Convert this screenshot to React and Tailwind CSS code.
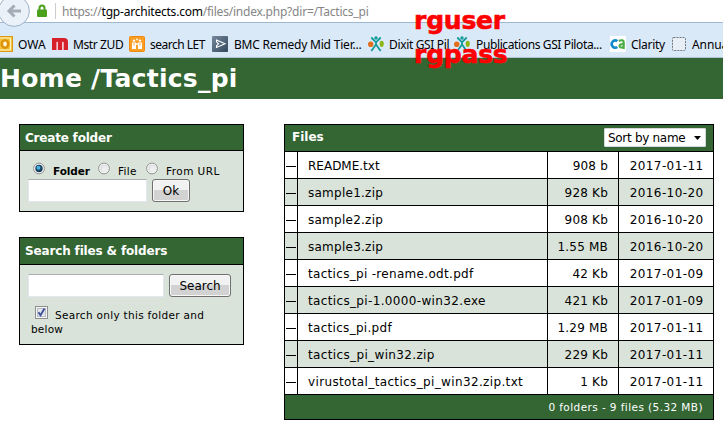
import React from 'react';

const files = [
  ['README.txt', '908 b', '2017-01-11', 'tracking-normal'],
  ['sample1.zip', '928 Kb', '2016-10-20', 'tracking-[0.25px]'],
  ['sample2.zip', '908 Kb', '2016-10-20', 'tracking-[0.25px]'],
  ['sample3.zip', '1.55 MB', '2016-10-20', 'tracking-[0.25px]'],
  ['tactics_pi -rename.odt.pdf', '42 Kb', '2017-01-09', 'tracking-[0.31px]'],
  ['tactics_pi-1.0000-win32.exe', '421 Kb', '2017-01-09', 'tracking-[0.35px]'],
  ['tactics_pi.pdf', '1.29 MB', '2017-01-11', 'tracking-[0.3px]'],
  ['tactics_pi_win32.zip', '229 Kb', '2017-01-11', 'tracking-[0.36px]'],
  ['virustotal_tactics_pi_win32.zip.txt', '1 Kb', '2017-01-11', 'tracking-[0.36px]'],
];

function OwaIcon() {
  return (
    <svg width="13" height="16" viewBox="3 0 13 16">
      <rect x="-1" y="0.5" width="16.5" height="15" fill="#f3c23c" stroke="#dc9a12" />
      <rect x="0" y="2" width="13.5" height="12" fill="none" stroke="#fff3c4" />
      <ellipse cx="8" cy="8" rx="3.2" ry="3.7" fill="#fff6d8" stroke="#dd9408" strokeWidth="2.6" />
    </svg>
  );
}

function MIcon() {
  return (
    <svg width="16" height="16" viewBox="0 0 16 16">
      <path d="M0 2H12Q16 2 16 6V14H11.5V7Q11.5 5.5 10.5 5.5V14H6V7Q6 5.5 4.8 5.5V14H0Z" fill="#d8202c" />
      <path d="M5.2 6V14M10.8 6V14" stroke="#f3c9d2" strokeWidth="1.4" />
    </svg>
  );
}

function SearchLetIcon() {
  return (
    <svg width="16" height="16" viewBox="0 0 16 16">
      <rect x="0.5" y="0.5" width="15" height="15" rx="1" fill="#fb9f24" stroke="#f08a13" />
      <g fill="#fff">
        <circle cx="5" cy="4.6" r="1.2" />
        <circle cx="11" cy="4.6" r="1.2" />
        <circle cx="8" cy="3.4" r="0.9" />
        <path d="M3 6.5H7V13H3ZM9 6.5H13V13H9ZM7 7.2H9V8.8H7Z" />
      </g>
      <path d="M5 7V9.5M11 7V9.5" stroke="#fb9f24" strokeWidth="0.8" />
    </svg>
  );
}

function BmcIcon() {
  return (
    <svg width="16" height="16" viewBox="0 0 16 16">
      <defs>
        <linearGradient id="bmc" x1="0" x2="1" y1="0" y2="1">
          <stop offset="0" stopColor="#75889b" />
          <stop offset="1" stopColor="#34485d" />
        </linearGradient>
      </defs>
      <rect width="16" height="16" rx="1" fill="url(#bmc)" />
      <path d="M4.5 4L13 7.8L4.5 11.5V9.8L6.5 7.8L4.5 5.8Z" fill="none" stroke="#fff" strokeWidth="1.1" />
    </svg>
  );
}

function PersonIcon() {
  return (
    <svg width="16" height="16" viewBox="0 0 16 16">
      <ellipse cx="2.7" cy="8.2" rx="2.7" ry="2.8" fill="#e0701e" />
      <ellipse cx="13.7" cy="7.8" rx="2.1" ry="3.1" fill="#8cb616" />
      <circle cx="8" cy="2" r="1.7" fill="#149a9a" />
      <path d="M3.3 1.5L8 6.3L12.7 1.5M8 6V8.5M3.3 15L8 8.5L12.7 15" fill="none" stroke="#149a9a" strokeWidth="1.8" />
    </svg>
  );
}

function CaIcon() {
  return (
    <svg width="16" height="16" viewBox="0 0 16 16">
      <rect width="16" height="16" fill="#fff" />
      <path d="M7.3 5.2A3.4 3.7 0 1 0 7.3 11" fill="none" stroke="#118acb" strokeWidth="2.6" />
      <path d="M8.8 4.9Q13.7 3 13.7 6.5V13M13.5 8.2Q9.5 7.7 9.5 10Q9.7 12.4 13.5 11" fill="none" stroke="#4dae48" strokeWidth="2.2" />
    </svg>
  );
}

function EmptyIcon() {
  return (
    <svg width="14" height="14" viewBox="0 0 14 14">
      <rect x="0.5" y="0.5" width="13" height="13" rx="1" fill="#e8eff7" stroke="#6f767d" strokeDasharray="2 1" />
    </svg>
  );
}

function Bookmark({ icon, label, width, text }) {
  return (
    <div className={'flex h-4 shrink-0 items-center gap-[5px] ' + width}>
      <span className="shrink-0">{icon}</span>
      <span className={'whitespace-pre pt-px leading-4 ' + text}>{label}</span>
    </div>
  );
}

function BrowserBar() {
  return (
    <header className="h-[58px] bg-[#dae9f8] font-['Noto_Sans','Open_Sans',sans-serif] text-[12px] text-black">
      <div className="flex h-[23px] items-start overflow-visible border-b border-[#9fb8d2] bg-white">
        <svg width="30" height="28" viewBox="0 0 30 28" className="relative shrink-0">
          <circle cx="14" cy="11" r="15.4" fill="#eaf1f9" stroke="#9db1c8" />
          <path d="M21 11H10M14.5 5.5L9 11L14.5 16.5" fill="none" stroke="#a4acb5" strokeWidth="3" />
        </svg>
        <svg width="10" height="13" viewBox="0 0 10 13" className="ml-[7px] mt-1 shrink-0">
          <path d="M2.5 6V4Q2.5 1.5 5 1.5T7.5 4V6" fill="none" stroke="#4ba01c" strokeWidth="2" />
          <rect y="5.5" width="10" height="7.5" rx="1" fill="#4ba01c" />
        </svg>
        <div className="ml-2 mt-[3px] h-4 w-px bg-[#c9cdd2]" />
        <div className="ml-[6px] mt-1 whitespace-pre leading-4 tracking-[-0.22px] text-[#858585]">
          https://<span className="text-black">tgp-architects.com</span>/files/index.php?dir=/Tactics_pi
        </div>
      </div>
      <nav className="flex h-[35px] items-start overflow-hidden border-b border-[#b3c3d5] pt-[13px]">
        <Bookmark icon={<OwaIcon />} label="OWA" width="w-[52px]" text="" />
        <Bookmark icon={<MIcon />} label="Mstr ZUD" width="w-[77px]" text="tracking-[-0.4px]" />
        <Bookmark icon={<SearchLetIcon />} label="search LET" width="w-[83px]" text="tracking-[-0.5px]" />
        <Bookmark icon={<BmcIcon />} label="BMC Remedy Mid Tier..." width="w-[156px]" text="tracking-[-0.2px] pl-px" />
        <Bookmark icon={<PersonIcon />} label="Dixit GSI Pil" width="w-[86px]" text="tracking-[-0.35px]" />
        <Bookmark icon={<PersonIcon />} label="Publications GSI Pilota..." width="w-[156px]" text="tracking-[-0.38px] pl-px" />
        <Bookmark icon={<CaIcon />} label="Clarity" width="w-[62px]" text="tracking-[-0.3px]" />
        <Bookmark icon={<EmptyIcon />} label="Annual" width="w-[70px]" text="tracking-[-0.1px] pl-px" />
      </nav>
    </header>
  );
}

function Radio({ checked }) {
  return (
    <svg width="13" height="13" viewBox="0 0 13 13" className="shrink-0">
      <circle cx="6" cy="6.5" r="5.4" fill="#f5f5f5" stroke="#8f9292" />
      <circle cx="6" cy="6.5" r="3.7" fill={checked ? '#17415f' : '#dedfe1'} />
      {checked ? <circle cx="5.5" cy="5.8" r="2" fill="#48b3e3" /> : <circle cx="6.7" cy="7.2" r="2.8" fill="#eeeff0" />}
    </svg>
  );
}

function Button({ children, className }) {
  return (
    <button className={'flex h-[23px] items-center justify-center rounded-[3px] border border-[#707070] bg-linear-to-b from-[#f2f2f2] from-50% to-[#d2d2d2] to-50% pt-px text-[12px] leading-none shadow-[inset_0_0_0_1px_#f7f7f7] ' + className}>
      {children}
    </button>
  );
}

function TextBox({ className }) {
  return <input className={'block h-[23px] rounded-[1px] border border-[#e2e7ef] border-t-[#abadb3] bg-white outline-none ' + className} />;
}

function Sidebar() {
  return (
    <aside className="flex w-[225px] flex-col gap-[25px]">
      <section className="h-[88px] border border-black bg-[#d9e3d9]">
        <h2 className="h-[26px] border-b border-black bg-[#336633] pl-[5px] text-[12px] font-bold leading-[26px] tracking-[-0.2px] text-white">Create folder</h2>
        <div className="flex h-[28px] items-start pl-[13px] pt-[11px] text-[10.5px]">
          <Radio checked />
          <b className="ml-[7px] mt-[2px] w-[45px] leading-[14px] tracking-[-0.1px]">Folder</b>
          <Radio />
          <span className="ml-[7px] mt-[2px] w-[28px] leading-[14px] tracking-[0.3px]">File</span>
          <Radio />
          <span className="ml-[7px] mt-[2px] whitespace-nowrap leading-[14px] tracking-[0.45px]">From URL</span>
        </div>
        <div className="flex gap-[5px] pl-2">
          <TextBox className="w-[119px]" />
          <Button className="w-[38px]">Ok</Button>
        </div>
      </section>
      <section className="h-[108px] border border-black bg-[#d9e3d9]">
        <h2 className="h-[27px] border-b border-black bg-[#336633] pl-[5px] text-[12px] font-bold leading-[27px] tracking-[-0.15px] text-white">Search files &amp; folders</h2>
        <div className="flex gap-[5px] pl-2 pt-[9px]">
          <TextBox className="w-[136px]" />
          <Button className="w-[62px]">Search</Button>
        </div>
        <div className="flex pl-[15px] pt-[9px] text-[10.5px]">
          <svg width="13" height="13" viewBox="0 0 13 13" className="shrink-0">
            <rect x="0.5" y="0.5" width="12" height="12" fill="#f4f4f4" stroke="#8e8f8f" />
            <rect x="2.5" y="2.5" width="8" height="8" fill="#e3e6ea" stroke="#b7bdc6" />
            <path d="M3.5 6.2L5.5 9.3L9.5 2.5" fill="none" stroke="#3f529b" strokeWidth="1.9" />
          </svg>
          <span className="ml-[7px] mt-[2px] whitespace-nowrap leading-[14px] tracking-[0.3px]">Search only this folder and</span>
        </div>
        <div className="pl-[11px] pt-px text-[10.5px] leading-[12px] tracking-[0.2px]">below</div>
      </section>
    </aside>
  );
}

function FileTable() {
  return (
    <section className="h-[296px] w-[430px] border border-black bg-[#336633]">
      <div className="flex h-[27px] items-start justify-between border-b border-black pl-[7px] pr-[7px]">
        <h2 className="text-[12px] font-bold leading-6 text-white">Files</h2>
        <div className="mt-[3px] flex h-[19px] w-[102px] items-center justify-between rounded-[1px] border border-[#d5d8dc] bg-white pl-[3px] pr-1 text-[12px]">
          <span className="whitespace-nowrap pt-px tracking-[-0.3px]">Sort by name</span>
          <svg width="7" height="4" viewBox="0 0 7 4"><path d="M0 0H7L3.5 4Z" /></svg>
        </div>
      </div>
      {files.map(([name, size, date, tracking], i) => (
        <div key={name} className={'grid h-[27px] grid-cols-[13px_250px_71px_94px] border-b border-black text-[12px] leading-[28px] ' + (i % 2 ? 'bg-[#d9e3d9]' : 'bg-white')}>
          <div className="flex items-center border-r border-black pl-px pt-[2px]"><span className="h-px w-[10px] bg-black" /></div>
          <div className={'h-[26px] whitespace-pre border-r border-black pl-[10px] ' + tracking}>{name}</div>
          <div className="h-[26px] border-r border-black pr-[10px] text-right tracking-[0.2px]">{size}</div>
          <div className="h-[26px] pr-[9.5px] text-right tracking-[0.4px]">{date}</div>
        </div>
      ))}
      <footer className="pr-[10px] text-right text-[10.5px] leading-[25px] tracking-[0.42px] text-white">0 folders - 9 files (5.32 MB)</footer>
    </section>
  );
}

export default function App() {
  return (
    <div className="relative h-[426px] w-[723px] overflow-hidden bg-white font-['DejaVu_Sans',Verdana,sans-serif] text-black">
      <BrowserBar />
      <h1 className="h-[41px] whitespace-pre bg-[#336633] text-[25px] font-bold leading-[42px] tracking-[0.25px] text-white">Home /Tactics_pi</h1>
      <main className="flex gap-10 pl-[19px] pt-[25px]">
        <Sidebar />
        <FileTable />
      </main>
      <div className="absolute left-[414px] top-[4px] text-[25px] font-bold leading-[34px] tracking-[-0.2px] text-[#ff0000] [-webkit-text-stroke:0.6px_#ff0000]">
        <div>rguser</div>
        <div>rgpass</div>
      </div>
    </div>
  );
}
